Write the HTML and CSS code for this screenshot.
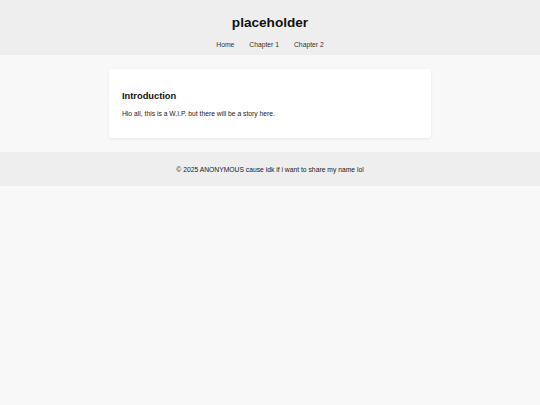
FILE: index.html
```html
<!DOCTYPE html>
<html lang="en">
<head>
<meta charset="utf-8">
<title>placeholder</title>
<link rel="stylesheet" href="styles.css">
</head>
<body>
<header class="site-header">
  <h1 class="site-title">placeholder</h1>
  <nav class="site-nav">
    <a href="#">Home</a>
    <a href="#">Chapter 1</a>
    <a href="#">Chapter 2</a>
  </nav>
</header>
<main class="content">
  <section class="card">
    <h2 class="card-title">Introduction</h2>
    <p class="card-text">Hlo all, this is a W.I.P. but there will be a story here.</p>
  </section>
</main>
<footer class="site-footer">
  <p>© 2025 ANONYMOUS cause idk if i want to share my name lol</p>
</footer>
</body>
</html>
```
FILE: styles.css
```css
html, body {
  margin: 0;
  padding: 0;
}
body {
  background: #f8f8f8;
  font-family: "Liberation Sans", Arial, sans-serif;
  color: #111;
  min-height: 405px;
}
.site-header {
  background: #eeeeee;
  height: 55px;
  box-sizing: border-box;
  padding-top: 15px;
  display: flex;
  flex-direction: column;
  align-items: center;
}
.site-title {
  margin: 0;
  font-size: 13.6px;
  line-height: 16px;
  font-weight: bold;
  color: #111;
}
.site-nav {
  margin-top: 8.5px;
  display: flex;
  gap: 15px;
  font-size: 6.75px;
  line-height: 9px;
}
.site-nav a {
  color: #333;
  text-decoration: none;
}
.content {
  padding: 14px 0;
  display: flex;
  justify-content: center;
}
.card {
  width: 322px;
  box-sizing: border-box;
  background: #fff;
  border-radius: 3px;
  box-shadow: 0 1px 3px rgba(0, 0, 0, 0.07);
  padding: 22px 13px 20.5px;
}
.card-title {
  margin: 0;
  font-size: 9.3px;
  line-height: 11.5px;
  font-weight: bold;
  color: #111;
}
.card-text {
  margin: 6px 0 0;
  font-size: 6.75px;
  line-height: 9px;
  color: #222;
}
.site-footer {
  background: #eeeeee;
  height: 34px;
  display: flex;
  align-items: center;
  justify-content: center;
}
.site-footer p {
  margin: 0;
  font-size: 6.75px;
  line-height: 9px;
  color: #222;
}
```
